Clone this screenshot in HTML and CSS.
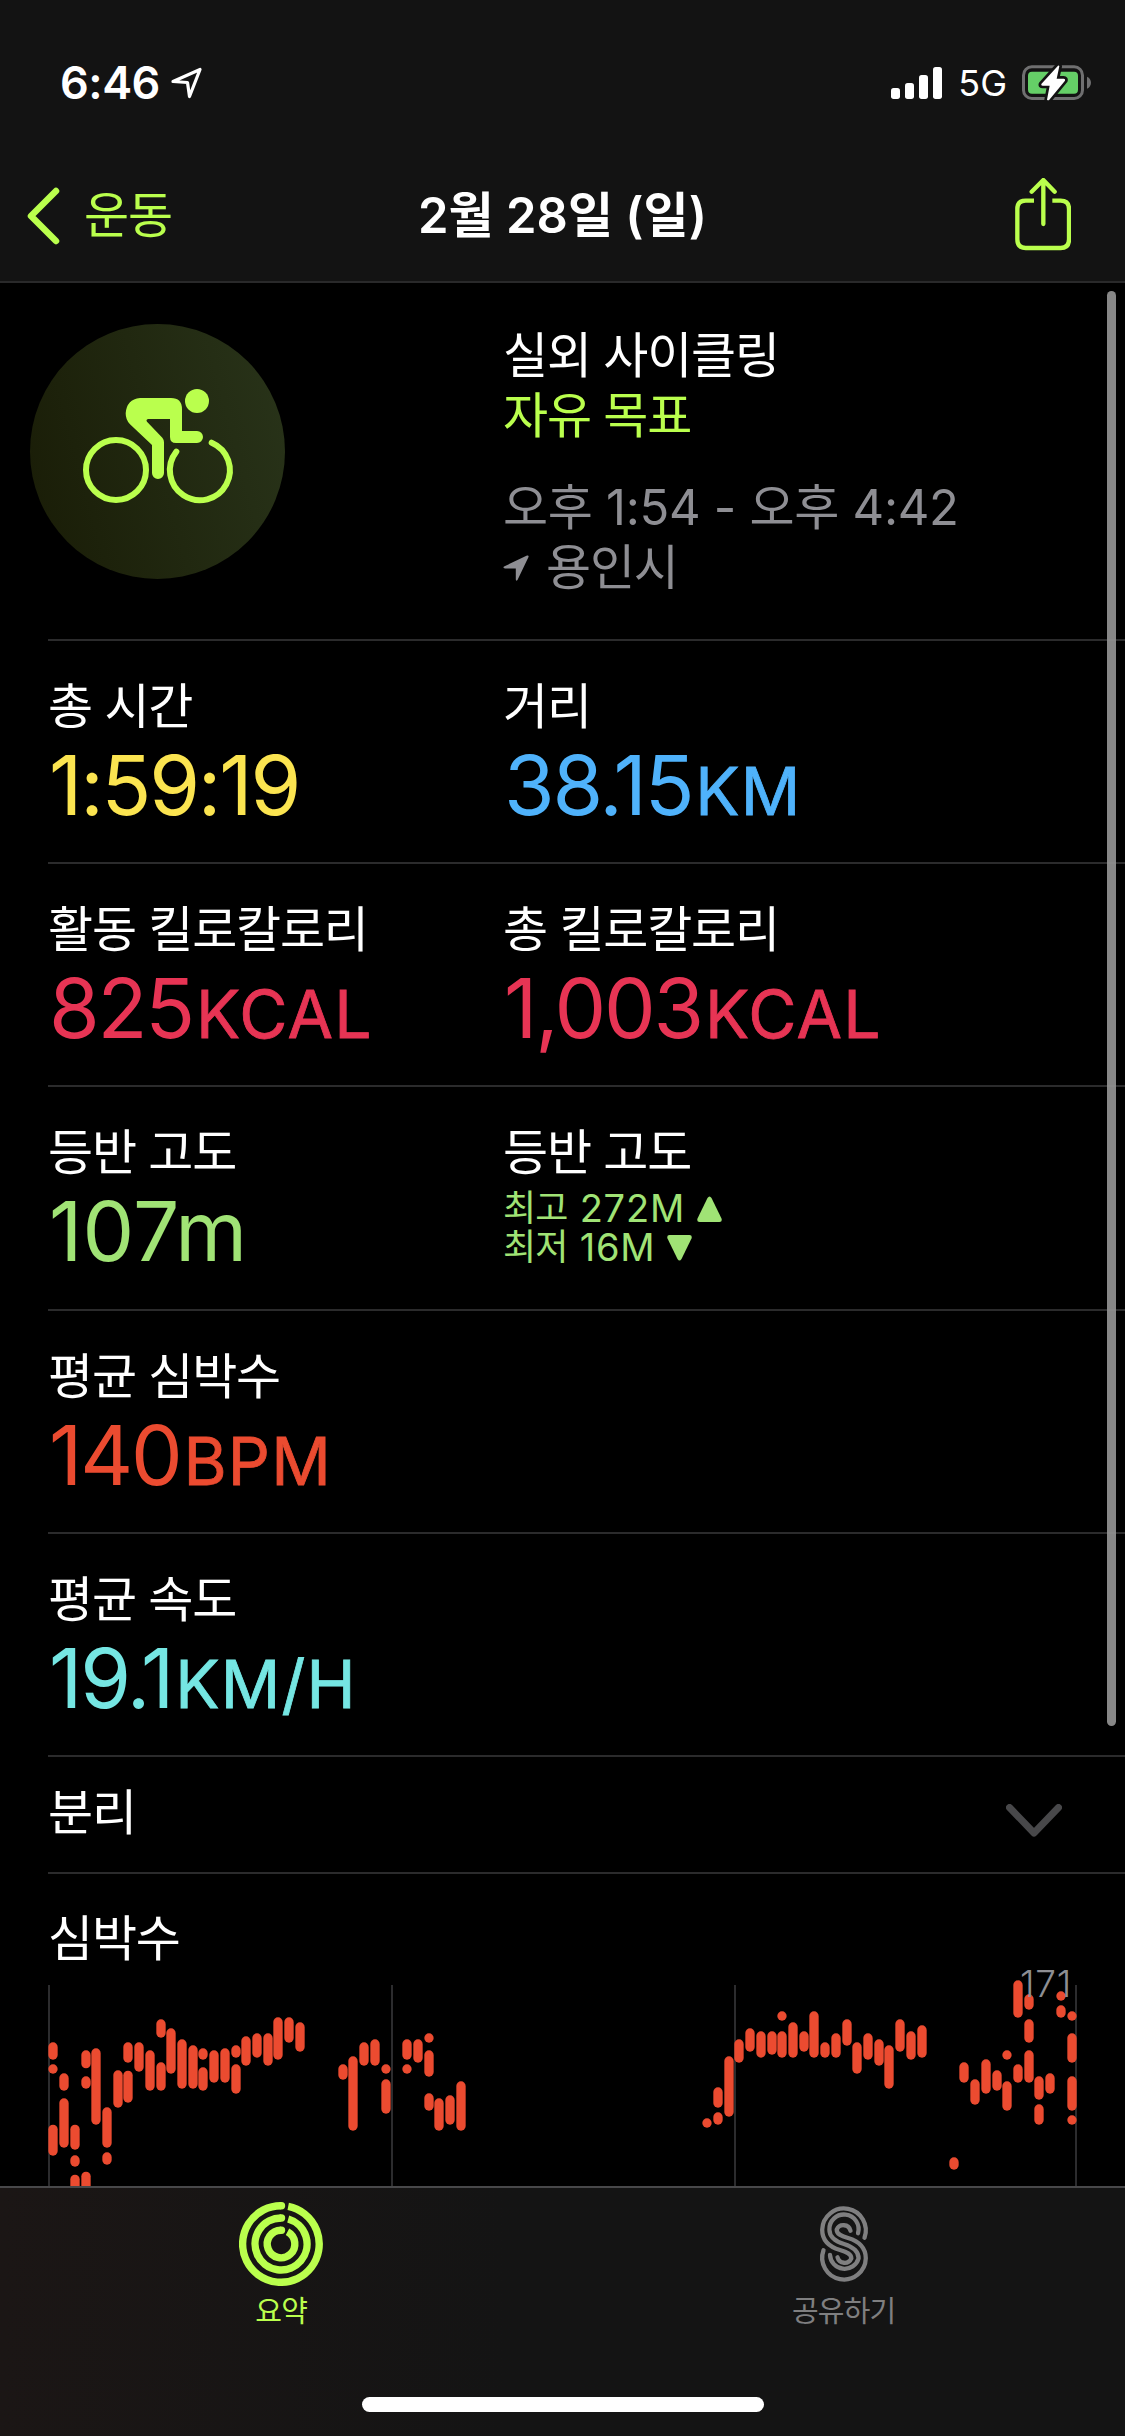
FILE: index.html
```html
<!DOCTYPE html>
<html lang="ko">
<head>
    <meta charset="UTF-8">
    <meta name="viewport" content="width=device-width, initial-scale=1.0">
    <title>운동</title>
    <link rel="stylesheet" href="styles.css">
</head>
<body>
    <div class="screen">
        <header class="top">
            <div class="status">
                <div class="clock">
                    <span class="time">6:46</span>
                    <svg width="32" height="32" viewBox="0 0 32 32"><path d="M2 14.500L29 2.500L18.500 29.500L16.500 15.500Z" fill="none" stroke="#fff" stroke-width="3.200" stroke-linejoin="round"/></svg>
                </div>
                <div class="signals">
                    <svg width="51" height="32" viewBox="0 0 153 96" fill="#fff">
                        <rect x="0" y="63" width="27" height="33" rx="8"/>
                        <rect x="42" y="48" width="27" height="48" rx="8"/>
                        <rect x="84" y="24" width="27" height="72" rx="8"/>
                        <rect x="126" y="0" width="27" height="96" rx="8"/>
                    </svg>
                    <span class="network">5G</span>
                    <svg width="70" height="36" viewBox="0 0 210 108">
                        <rect x="4.500" y="5.500" width="177" height="95" rx="25" fill="none" stroke="#6f6f70" stroke-width="9"/>
                        <path d="M195 35c16 6 16 30 0 36z" fill="#6f6f70"/>
                        <rect x="18" y="20" width="150" height="66" rx="12" fill="#65cf67"/>
                        <path d="M108 2L58 57Q56 62 62 62H83L75 104Q79 108 82 104L129 47Q131 41 125 41H104L112 4Q111 0 108 2Z" fill="#fff" stroke="#131313" stroke-width="16" stroke-linejoin="round" paint-order="stroke"/>
                    </svg>
                </div>
            </div>
            <nav class="nav">
                <a class="back">
                    <svg width="34" height="58" viewBox="0 0 34 58"><path d="M30 4L5 29L30 54" fill="none" stroke="#baff4d" stroke-width="6.500" stroke-linecap="round" stroke-linejoin="round"/></svg>
                    <span>운동</span>
                </a>
                <h1>2월 28일 (일)</h1>
                <svg class="share" width="56" height="73" viewBox="0 0 168 219" fill="none" stroke="#baff4d" stroke-width="13">
                    <path d="M57 68H32Q7 68 7 93V184Q7 210 32 210H137Q162 210 162 184V93Q162 68 137 68H112"/>
                    <path d="M85 138V8M50 41L85 6L119 41" stroke-linecap="round" stroke-linejoin="round"/>
                </svg>
            </nav>
        </header>

        <main class="content">
            <section class="row intro">
                <div class="avatar">
                    <svg width="180" height="150" viewBox="0 0 540 450">
                        <g fill="none" stroke="#baff4d" stroke-width="18" stroke-linecap="round">
                            <circle cx="138" cy="300" r="90"/>
                            <path d="M319 245A90 90 0 1 0 425 218"/>
                        </g>
                        <g fill="#baff4d">
                            <circle cx="381" cy="93" r="36"/>
                            <path d="M210 84H303Q336 84 336 118V183H381A18 18 0 0 1 381 219H318Q300 219 300 201V147H234Q227 149 231 155L277 203Q282 209 282 217V309A18 18 0 0 1 246 309V225L180 163Q167 150 167 130Q170 88 210 84Z"/>
                        </g>
                    </svg>
                </div>
                <div class="details">
                    <p>실외 사이클링</p>
                    <p class="goal">자유 목표</p>
                    <p class="period">오후 1:54 - 오후 4:42</p>
                    <p class="place"><svg width="26" height="26" viewBox="0 0 26 26"><path d="M1 11.500L24 0.500Q26 0 25.500 2L14.500 25Q13 26.500 12.800 24.500V13.500H2Q-0.500 13 1 11.500Z" fill="#8e8e93"/></svg>용인시</p>
                </div>
            </section>

            <section class="row stats">
                <div class="stat">
                    <p class="label">총 시간</p>
                    <p class="value yellow">1:59:19</p>
                </div>
                <div class="stat">
                    <p class="label">거리</p>
                    <p class="value blue">38.15<span class="unit">KM</span></p>
                </div>
            </section>

            <section class="row stats">
                <div class="stat">
                    <p class="label">활동 킬로칼로리</p>
                    <p class="value pink">825<span class="unit">KCAL</span></p>
                </div>
                <div class="stat">
                    <p class="label">총 킬로칼로리</p>
                    <p class="value pink">1,003<span class="unit">KCAL</span></p>
                </div>
            </section>

            <section class="row stats">
                <div class="stat">
                    <p class="label">등반 고도</p>
                    <p class="value green climb">107m</p>
                </div>
                <div class="stat">
                    <p class="label">등반 고도</p>
                    <div class="range green">
                        <p>최고 <span class="num">272M</span><svg width="25" height="26" viewBox="0 0 25 26"><path d="M10.500 2Q12.500-1 14.500 2L24.500 22.500Q25.500 26 22.500 26H2.500Q-.5 26 .5 22.500Z" fill="#a0e375"/></svg></p>
                        <p>최저 <span class="num">16M</span><svg width="25" height="26" viewBox="0 0 25 26"><path d="M10.500 24Q12.500 27 14.500 24L24.500 3.500Q25.500 0 22.500 0H2.500Q-.5 0 .5 3.500Z" fill="#a0e375"/></svg></p>
                    </div>
                </div>
            </section>

            <section class="row stats">
                <div class="stat">
                    <p class="label">평균 심박수</p>
                    <p class="value red">140<span class="unit">BPM</span></p>
                </div>
            </section>

            <section class="row stats">
                <div class="stat">
                    <p class="label">평균 속도</p>
                    <p class="value cyan">19.1<span class="unit">KM/H</span></p>
                </div>
            </section>

            <section class="row splits">
                <p class="label">분리</p>
                <svg width="56" height="34" viewBox="0 0 56 34"><path d="M3.500 3.500L28 29L52.500 3.500" fill="none" stroke="#48484a" stroke-width="7" stroke-linecap="round" stroke-linejoin="round"/></svg>
            </section>

            <section class="heart">
                <p class="label">심박수</p>
                <div class="chart">
                    <svg id="heartChart" width="1125" height="227" viewBox="0 0 3375 681">
                        <path d="M147 72V690M1176 72V690M2205 72V690M3228 72V690" stroke="#2c2c2e" stroke-width="6"/>
                    </svg>
                    <span class="peak">171</span>
                </div>
            </section>
            <div class="scrollbar"></div>
        </main>

        <footer class="tabs">
            <div class="tab-row">
                <a class="tab active">
                    <svg width="84" height="84" viewBox="-42 -42 84 84" fill="none" stroke="#baff4d" stroke-width="7.400">
                        <path d="M7.200-37.600A38.300 38.300 0 1 1 0-38.300"/>
                        <path d="M7.200-25A26 26 0 1 1 0-26"/>
                        <path d="M6.500-12.200A13.800 13.800 0 1 1 0-13.800"/>
                        <g fill="#baff4d" stroke="none">
                            <circle cx="0.500" cy="-38.300" r="3.700"/>
                            <circle cx="0.500" cy="-26" r="3.700"/>
                            <circle cx="0.500" cy="-13.800" r="3.700"/>
                        </g>
                    </svg>
                    <span>요약</span>
                </a>
                <a class="tab">
                    <svg width="84" height="84" viewBox="-42 -42 84 84" fill="none" stroke="#7f7f80" stroke-width="4.300" stroke-linecap="round">
                        <path id="lane" d="M20.500-6.300A21.800 21.800 0 1 0-21.800-14.300C-21.800-3-14 3-4 6C3 8 7.300 10 7.300 14.300A7.300 7.300 0 0 1-6.500 13.300"/>
                        <path d="M14-10.800A14.600 14.600 0 1 0-14.600-14.300C-14.600-6-8-2.500 0 0C8 2.500 14.600 6 14.600 14.300A14.600 14.600 0 0 1-14 10.800"/>
                        <use href="#lane" transform="rotate(180)"/>
                    </svg>
                    <span>공유하기</span>
                </a>
            </div>
            <div class="home"></div>
        </footer>
    </div>
    <script src="script.js"></script>
</body>
</html>
```
FILE: styles.css
```css
* {
    box-sizing: border-box;
    margin: 0;
    padding: 0;
}
body {
    background: #000;
    color: #fff;
    font-family: Inter, "Noto Sans CJK KR", sans-serif;
    font-size: 49px;
    line-height: 60px;
    letter-spacing: -1.2px;
}
svg {
    display: block;
    flex: none;
}
.screen {
    width: 1125px;
    height: 2436px;
    display: flex;
    flex-direction: column;
    overflow: hidden;
}

/* status bar and navigation */
.top {
    height: 283px;
    flex: none;
    background: #131313;
    border-bottom: 2px solid #29292a;
}
.status {
    height: 132px;
    padding: 35px 33px 0 60px;
    display: flex;
    justify-content: space-between;
}
.clock,
.signals {
    height: 96px;
    display: flex;
    align-items: center;
}
.time {
    font-size: 45px;
    font-weight: 600;
    letter-spacing: -0.5px;
    margin-right: 11px;
}
.network {
    font-size: 36px;
    margin: 0 15px 0 16px;
    letter-spacing: 0;
}
.nav {
    height: 149px;
    padding: 18px 26px 0;
    display: grid;
    grid-template-columns: 1fr auto 1fr;
    align-items: center;
}
.back {
    display: flex;
    align-items: center;
    gap: 24px;
    color: #baff4d;
}
.nav h1 {
    font-size: 49px;
    font-weight: 600;
    letter-spacing: 0;
}
.share {
    justify-self: end;
    margin: 0 28px 2px 0;
}

/* workout summary */
.content {
    flex: 1;
    position: relative;
    overflow: hidden;
}
.row {
    margin-left: 48px;
    border-bottom: 2px solid #2b2b2c;
}
.intro {
    height: 358px;
    display: flex;
}
.avatar {
    width: 255px;
    height: 255px;
    margin: 41px 218px 0 -18px;
    padding: 46px 0 0 40px;
    border-radius: 50%;
    background: linear-gradient(75deg, #191c06, #29341a);
}
.details {
    padding-top: 43px;
}
.goal {
    color: #baff4d;
}
.period,
.place {
    color: #8e8e93;
}
.period {
    margin-top: 32px;
    letter-spacing: -0.3px;
}
.place {
    display: flex;
    align-items: center;
    gap: 17px;
}
.stats {
    height: 223.200px;
    padding-top: 36px;
    display: flex;
}
.stat {
    width: 455px;
}
.value {
    margin-top: 4px;
    padding-left: 1px;
    font-size: 82px;
    font-weight: 400;
    line-height: 90px;
    letter-spacing: -2.2px;
    white-space: nowrap;
}
.unit {
    margin-left: 3px;
    font-size: 66px;
    letter-spacing: 1.2px;
    -webkit-text-stroke: 0.8px currentColor;
    stroke-linejoin: round;
}
.climb {
    letter-spacing: 0.2px;
}
.yellow {
    color: #fbe450;
}
.blue {
    color: #4fb2fb;
}
.pink {
    color: #e73454;
}
.green {
    color: #a0e375;
}
.red {
    color: #eb4b30;
}
.cyan {
    color: #75e6e3;
}
.range {
    padding-top: 6px;
    font-size: 36px;
    line-height: 39px;
    letter-spacing: -0.8px;
}
.range p {
    display: flex;
    align-items: center;
}
.range svg {
    margin-left: 12px;
}
.num {
    margin-left: 12px;
    font-size: 38px;
    letter-spacing: 0.8px;
}
.splits {
    height: 117px;
    padding-right: 63px;
    display: flex;
    align-items: center;
    justify-content: space-between;
}
.splits svg {
    margin-top: 14px;
}
.splits .label {
    margin-bottom: 2px;
}

/* heart rate chart */
.heart .label {
    padding: 35px 0 0 48px;
    height: 87px;
}
.chart {
    position: relative;
}
.peak {
    position: absolute;
    top: -2px;
    left: 1020px;
    font-size: 37px;
    font-weight: 300;
    line-height: 50px;
    letter-spacing: 0.8px;
    color: #8e8e93;
}
.scrollbar {
    position: absolute;
    top: 8px;
    right: 9px;
    width: 9px;
    height: 1435px;
    border-radius: 5px;
    background: rgba(150, 150, 150, 0.9);
}

/* tab bar */
.tabs {
    height: 250px;
    flex: none;
    background: linear-gradient(90deg, #1b1615, #141414 45%);
    border-top: 2px solid #48484a;
    display: flex;
    flex-direction: column;
    align-items: center;
    justify-content: space-between;
    padding-bottom: 24px;
}
.tab-row {
    width: 100%;
    display: flex;
}
.tab {
    flex: 1;
    padding-top: 14px;
    display: flex;
    flex-direction: column;
    align-items: center;
    gap: 6px;
    font-size: 29px;
    line-height: 40px;
    letter-spacing: -0.8px;
    color: #7f7f80;
}
.tab.active {
    color: #baff4d;
}
.home {
    width: 402px;
    height: 15px;
    border-radius: 8px;
    background: #fff;
}
```
FILE: script.js
```js
// [x, top, bottom, top, bottom, ...] for every column of the chart
const samples = [
    [159, 244, 296, 310, 338, 491, 584], [192, 337, 389, 412, 560],
    [225, 491, 566, 583, 617, 641, 720], [258, 268, 322, 346, 383, 632, 720],
    [288, 262, 491], [321, 439, 560, 574, 611], [354, 328, 440],
    [384, 244, 305, 329, 425], [417, 244, 332], [450, 268, 389],
    [483, 175, 230, 304, 389], [513, 202, 338], [546, 235, 383],
    [579, 253, 383], [609, 262, 296, 319, 389], [642, 268, 365],
    [675, 262, 365], [708, 253, 290, 310, 398], [738, 226, 314],
    [771, 217, 290], [804, 217, 314], [834, 169, 296], [867, 169, 245],
    [900, 184, 272], [1029, 310, 356], [1059, 286, 509], [1092, 244, 314],
    [1125, 235, 314], [1158, 310, 338, 355, 458], [1221, 235, 296, 310, 338],
    [1254, 235, 305], [1287, 217, 245, 268, 347, 397, 449],
    [1317, 412, 509], [1350, 403, 491], [1383, 361, 509],
    [2121, 472, 500], [2154, 379, 440, 454, 491], [2187, 286, 467],
    [2217, 235, 305], [2250, 202, 272], [2283, 211, 290], [2316, 211, 281],
    [2346, 151, 179, 211, 290], [2379, 184, 290], [2412, 211, 272],
    [2442, 151, 290], [2475, 244, 290], [2508, 217, 290], [2541, 175, 254],
    [2571, 244, 338], [2604, 217, 296], [2637, 235, 314], [2667, 253, 383],
    [2700, 175, 272], [2733, 211, 296], [2766, 193, 290], [2862, 589, 626],
    [2892, 304, 365], [2925, 355, 431], [2958, 295, 398], [2991, 328, 389],
    [3021, 268, 296, 361, 449], [3054, 58, 170, 310, 365],
    [3087, 100, 146, 175, 245, 268, 365], [3117, 346, 416, 430, 491],
    [3150, 337, 398], [3183, 91, 119, 133, 170],
    [3216, 151, 179, 217, 305, 346, 449, 463, 491]
];

const chart = document.getElementById('heartChart');
samples.forEach(([x, ...spans]) => {
    for (let i = 0; i < spans.length; i += 2) {
        const bar = document.createElementNS('http://www.w3.org/2000/svg', 'rect');
        bar.setAttribute('x', x - 14);
        bar.setAttribute('y', spans[i]);
        bar.setAttribute('width', 28);
        bar.setAttribute('height', spans[i + 1] - spans[i]);
        bar.setAttribute('rx', 14);
        bar.setAttribute('fill', '#eb4b30');
        chart.appendChild(bar);
    }
});
```
